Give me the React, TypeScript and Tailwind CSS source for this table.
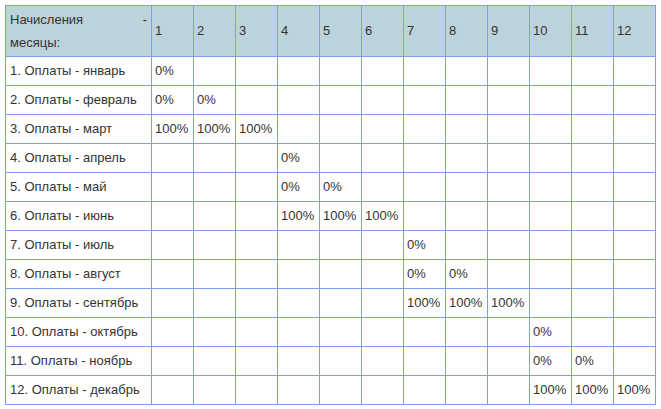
const months = [
  "январь",
  "февраль",
  "март",
  "апрель",
  "май",
  "июнь",
  "июль",
  "август",
  "сентябрь",
  "октябрь",
  "ноябрь",
  "декабрь",
];

// quarter pattern: 1st month of quarter pays 0% in first column, 2nd 0% in two, 3rd 100% in three
const cellValue = (row: number, col: number): string => {
  const q = Math.floor(row / 3);
  const pos = row % 3;
  const start = q * 3;
  if (col < start || col > start + pos) return "";
  return pos === 2 ? "100%" : "0%";
};

const cols = Array.from({ length: 12 }, (_, i) => i);

const App = () => {
  return (
    <div className="min-h-[409px] bg-white p-[5px] font-['Liberation_Sans',Arial,sans-serif] text-[13px] text-[#333333]">
      <table className="table-fixed border-collapse">
        <colgroup>
          <col className="w-[146px]" />
          {cols.map((c) => (
            <col key={c} className="w-[42px]" />
          ))}
        </colgroup>
        <thead>
          <tr className="h-[51px] bg-[#bcd3db]">
            <th className="border border-[#7e9cf2] px-[4px] py-[2px] text-left align-middle font-normal leading-[23px]">
              <div className="flex justify-between">
                <span>Начисления</span>
                <span>-</span>
              </div>
              <div>месяцы:</div>
            </th>
            {cols.map((c) => (
              <th
                key={c}
                className="border border-[#7e9cf2] px-[3px] text-left align-middle font-normal"
              >
                {c + 1}
              </th>
            ))}
          </tr>
        </thead>
        <tbody>
          {months.map((m, r) => (
            <tr key={m} className="h-[29px]">
              <td className="border border-[#7e9cf2] px-[4px] align-middle whitespace-nowrap">
                {r + 1}. Оплаты - {m}
              </td>
              {cols.map((c) => (
                <td key={c} className="border border-[#7e9cf2] px-[3px] align-middle whitespace-nowrap">
                  {cellValue(r, c)}
                </td>
              ))}
            </tr>
          ))}
        </tbody>
      </table>
    </div>
  );
};

export default App;
